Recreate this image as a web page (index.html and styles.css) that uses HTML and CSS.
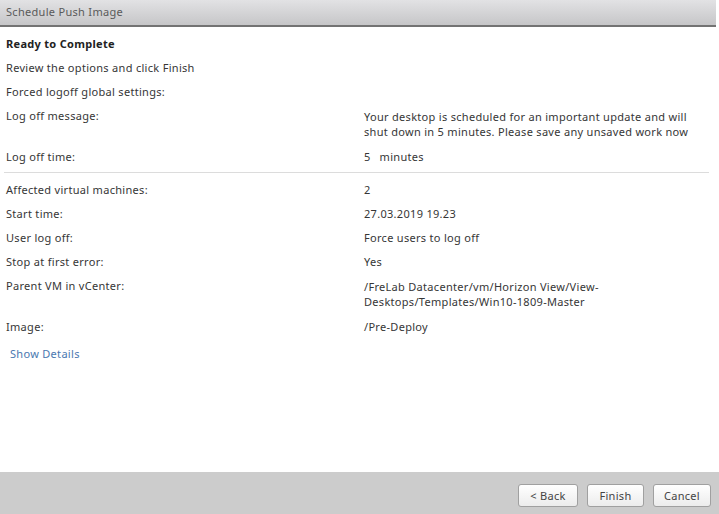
FILE: index.html
```html
<!DOCTYPE html>
<html>
<head>
<meta charset="utf-8">
<link rel="stylesheet" href="styles.css">
</head>
<body>
<div class="dialog">
  <div class="titlebar">Schedule Push Image</div>
  <div class="content">
    <div class="heading">Ready to Complete</div>
    <div class="line">Review the options and click Finish</div>
    <div class="line">Forced logoff global settings:</div>
    <div class="grid">
      <div class="label">Log off message:</div>
      <div class="value multi">Your desktop is scheduled for an important update and will<br>shut down in 5 minutes. Please save any unsaved work now</div>
      <div class="label">Log off time:</div>
      <div class="value"><span class="num">5</span>minutes</div>
    </div>
    <div class="sep"></div>
    <div class="grid">
      <div class="label">Affected virtual machines:</div>
      <div class="value">2</div>
      <div class="label">Start time:</div>
      <div class="value">27.03.2019 19.23</div>
      <div class="label">User log off:</div>
      <div class="value">Force users to log off</div>
      <div class="label">Stop at first error:</div>
      <div class="value">Yes</div>
      <div class="label">Parent VM in vCenter:</div>
      <div class="value multi">/FreLab Datacenter/vm/Horizon View/View-<br>Desktops/Templates/Win10-1809-Master</div>
      <div class="label">Image:</div>
      <div class="value">/Pre-Deploy</div>
    </div>
    <a class="details" href="#">Show Details</a>
  </div>
  <div class="footer">
    <button class="btn btn-back">&lt; Back</button>
    <button class="btn btn-finish">Finish</button>
    <button class="btn btn-cancel">Cancel</button>
  </div>
</div>
</body>
</html>
```
FILE: styles.css
```css
html, body {
  margin: 0;
  padding: 0;
  background: #ffffff;
}
body {
  font-family: "Noto Sans", "DejaVu Sans", sans-serif;
  font-size: 11px;
  letter-spacing: 0.3px;
  color: #363636;
}
.dialog {
  width: 719px;
  height: 514px;
  display: flex;
  flex-direction: column;
}
.titlebar {
  height: 27px;
  line-height: 24px;
  padding-left: 6px;
  margin-right: 3px;
  color: #5a5a5a;
  background: linear-gradient(#e2e2e4, #c6c6c8);
  border-bottom: 2px solid #737373;
  box-sizing: border-box;
}
.content {
  flex: 1;
  padding: 5px 6px 0 6px;
  display: flex;
  flex-direction: column;
}
.heading {
  font-weight: bold;
  line-height: 14px;
  padding: 5px 0;
  color: #222;
}
.line {
  line-height: 14px;
  padding: 5px 0;
}
.grid {
  display: grid;
  grid-template-columns: 358px 1fr;
}
.label, .value {
  line-height: 14px;
  padding: 5px 0;
}
.value.multi {
  line-height: 15px;
  padding-bottom: 6px;
}
.num {
  margin-right: 9px;
}
.sep {
  height: 1px;
  background: #dcdcdc;
  margin: 3px 4px 5px -2px;
}
.details {
  color: #4a78b0;
  text-decoration: none;
  line-height: 14px;
  padding: 8px 0 0 4px;
}
.footer {
  height: 42px;
  background: #cccccc;
  display: flex;
  justify-content: flex-end;
  align-items: center;
  gap: 9px;
  padding: 0 8px 0 0;
  box-sizing: border-box;
}
.btn {
  font-family: "Noto Sans", "DejaVu Sans", sans-serif;
  font-size: 11px;
  letter-spacing: 0.3px;
  color: #444;
  height: 23px;
  border: 1px solid #a0a0a0;
  border-radius: 3px;
  background: linear-gradient(#ffffff, #ececec);
  padding: 0;
  margin-top: 4px;
}
.btn-back { width: 60px; }
.btn-finish { width: 57px; }
.btn-cancel { width: 58px; }
```
